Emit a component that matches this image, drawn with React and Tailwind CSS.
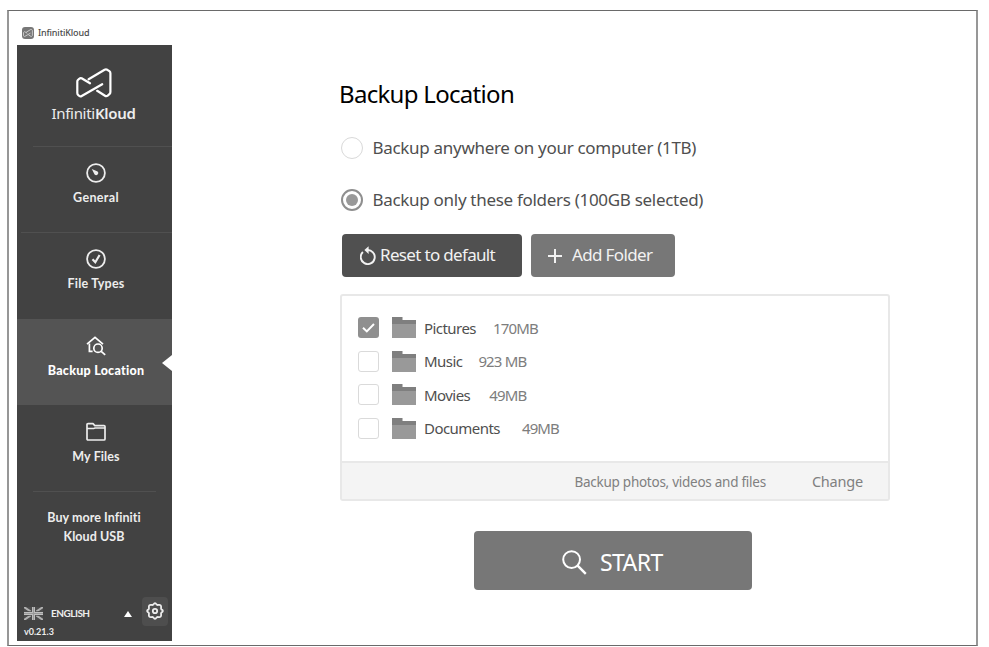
import { useState } from 'react';

const LogoMark = ({ className, strokeWidth = 2.2 }) => (
  <svg viewBox="0 0 36 30" className={className} fill="none" stroke="currentColor" strokeWidth={strokeWidth} strokeLinecap="round" strokeLinejoin="round">
    <path d="M14 15.3 L5.6 10.3 Q4.4 9.8 3.2 10.8 L1.9 12 Q1.3 12.6 1.3 13.6 V25 Q1.3 26.4 2.3 27.2 L3.3 28 Q4.4 28.9 5.7 28 L26.2 16.2" />
    <path d="M12.6 11.3 L28.6 1.8 Q30 1 31.3 1.8 L33.4 3.2 Q34.4 3.9 34.4 5.2 V24 Q34.4 25.3 33.4 26.2 L31.7 27.6 Q30.4 28.6 29 27.7 L21.2 22.8" />
  </svg>
);

const GaugeIcon = () => (
  <svg viewBox="0 0 20 20" className="w-5 h-5" fill="none" stroke="currentColor" strokeWidth="1.8">
    <circle cx="10" cy="10" r="8.9" />
    <path d="M5.8 6 L11.6 8.6 A2 2 0 1 1 8.6 11.6 Z" fill="currentColor" stroke="none" />
  </svg>
);

const CheckCircleIcon = () => (
  <svg viewBox="0 0 20 20" className="w-5 h-5" fill="none" stroke="currentColor" strokeWidth="1.8">
    <circle cx="10" cy="10" r="8.9" />
    <path d="M6.5 10.2 L9.3 13.2 L13.6 6" strokeWidth="2.2" />
  </svg>
);

const HomeSearchIcon = () => (
  <svg viewBox="0 0 20 20" className="w-5 h-5" fill="none" stroke="currentColor" strokeWidth="1.7">
    <path d="M1 8.2 L9 1.4 L17 8.2" />
    <path d="M3.4 7.4 V15.4 H6.6" />
    <circle cx="12" cy="12.2" r="4.2" />
    <path d="M15.2 15.3 L19.2 18.8" />
  </svg>
);

const FolderOutlineIcon = () => (
  <svg viewBox="0 0 20 20" className="w-5 h-5" fill="none" stroke="currentColor" strokeWidth="1.7" strokeLinejoin="round">
    <path d="M1 17 V2.6 Q1 1.6 2 1.6 H7 L8.8 3.6 H18 Q19 3.6 19 4.6 V17 Q19 18 18 18 H2 Q1 18 1 17 Z" />
    <path d="M1 6.6 H7.6 L9 6 H19" strokeWidth="1.5" />
  </svg>
);

const FlagIcon = () => (
  <svg viewBox="0 0 19 13" className="w-[19px] h-[13px]">
    <rect width="19" height="13" fill="#4c4c4c" />
    <path d="M0 0 L19 13 M19 0 L0 13" stroke="#b0b0b0" strokeWidth="2" />
    <path d="M9.5 0 V13 M0 6.5 H19" stroke="#4c4c4c" strokeWidth="4.4" />
    <path d="M9.5 0 V13 M0 6.5 H19" stroke="#c0c0c0" strokeWidth="3" />
    <path d="M9.5 0 V13 M0 6.5 H19" stroke="#999999" strokeWidth="1.2" />
  </svg>
);

const GearIcon = () => (
  <svg viewBox="0 0 18 18" className="w-[18px] h-[18px]" fill="none" stroke="currentColor" strokeWidth="1.8" strokeLinejoin="round">
    <path d="M7.4 2.6 Q9 -0.4 10.6 2.6 Q11.5 3.2 12.4 2.9 Q15.5 2.4 15.1 5.6 Q14.8 6.5 15.4 7.4 Q18.4 9 15.4 10.6 Q14.8 11.5 15.1 12.4 Q15.5 15.6 12.4 15.1 Q11.5 14.8 10.6 15.4 Q9 18.4 7.4 15.4 Q6.5 14.8 5.6 15.1 Q2.4 15.6 2.9 12.4 Q3.2 11.5 2.6 10.6 Q-0.4 9 2.6 7.4 Q3.2 6.5 2.9 5.6 Q2.4 2.4 5.6 2.9 Q6.5 3.2 7.4 2.6 Z" />
    <circle cx="9" cy="9" r="2.2" />
  </svg>
);

const FolderIcon = () => (
  <svg viewBox="0 0 24 21" className="w-6 h-[21px]">
    <path d="M0 0 H10.5 V3 H24 V21 H0 Z" fill="#7f7f7f" />
    <rect y="7" width="24" height="14" fill="#999999" />
  </svg>
);

const ResetIcon = () => (
  <svg viewBox="0 0 16 19" className="w-4 h-[19px]" fill="none" stroke="currentColor" strokeWidth="1.9">
    <path d="M2.9 6 A7 7 0 1 0 7 4.1 H8.5" />
    <path d="M4.4 4.1 L8.6 0.2 V8 Z" fill="currentColor" stroke="none" />
  </svg>
);

const menuItems = [
  { icon: <GaugeIcon />, label: 'General', text: 'tracking-[0.35px]' },
  { icon: <CheckCircleIcon />, label: 'File Types', text: 'tracking-[0.2px]' },
  { icon: <HomeSearchIcon />, label: 'Backup Location', text: 'tracking-[0.25px]' },
  { icon: <FolderOutlineIcon />, label: 'My Files', text: 'tracking-[0.1px]' },
];

const initialFolders = [
  { name: 'Pictures', size: '170MB', checked: true, gap: 'ml-[17px]' },
  { name: 'Music', size: '923 MB', checked: false, gap: 'ml-4' },
  { name: 'Movies', size: '49MB', checked: false, gap: 'ml-[19px]' },
  { name: 'Documents', size: '49MB', checked: false, gap: 'ml-[22px]' },
];

const Sidebar = ({ active, onSelect }) => (
  <aside className="w-[155px] h-[596px] flex flex-col bg-[#424242] text-[#ededed] font-['Lato',sans-serif]">
    <div className="h-[101px] pt-[23px] flex flex-col items-center">
      <LogoMark className="w-9 h-[30px] -ml-[1px] text-white" />
      <div className="mt-[5px] -ml-[2px] text-[15px] leading-5 font-['Noto_Sans',sans-serif] tracking-[-0.3px] whitespace-nowrap">
        Infiniti<span className="font-semibold">Kloud</span>
      </div>
    </div>

    <nav className="flex flex-col">
      {menuItems.map((item, i) => {
        const isActive = item.label === active;
        return (
          <button
            key={item.label}
            onClick={() => onSelect(item.label)}
            className={`relative h-[86.3px] pt-[17px] flex flex-col items-center ${isActive ? 'bg-[#545454] text-white' : ''}`}
          >
            {i < 2 && <span className={`absolute top-0 right-0 h-px bg-[#505050] ${i === 0 ? 'left-4' : 'left-1'}`} />}
            <span className="ml-[2px]">{item.icon}</span>
            <span className={`mt-[6px] ml-[3px] text-[12.5px] leading-[18px] whitespace-nowrap ${item.text} ${isActive ? 'font-black' : 'font-bold'}`}>{item.label}</span>
            {isActive && (
              <span className="absolute right-0 top-[36px] border-y-[8px] border-y-transparent border-r-[10px] border-r-white" />
            )}
          </button>
        );
      })}
    </nav>

    <div className="mx-4 h-px bg-[#505050]" />
    <p className="mt-[17px] pr-px text-center text-[12.5px] leading-[18.5px] font-bold tracking-[0.05px]">
      Buy more Infiniti
      <br />
      Kloud USB
    </p>

    <div className="mt-auto h-[44px] pl-[7px] pr-[4px] flex">
      <div className="flex-1">
        <div className="mt-[9px] h-[15px] flex items-center">
          <FlagIcon />
          <span className="ml-2 text-[10px] font-bold tracking-[-0.5px]">ENGLISH</span>
          <span className="ml-auto mr-[10px] border-x-[4px] border-x-transparent border-b-[6px] border-b-white" />
        </div>
        <div className="mt-[5px] text-[9px] leading-3 font-bold">v0.21.3</div>
      </div>
      <button className="w-[26px] h-[29px] pb-[2px] flex items-center justify-center rounded-sm bg-[#4e4e4e]" title="Settings">
        <GearIcon />
      </button>
    </div>
  </aside>
);

const RadioRow = ({ label, selected, onClick, text }) => (
  <button onClick={onClick} className="h-[52px] flex items-center">
    <span className={`w-[22px] h-[22px] ml-[0.5px] mb-px rounded-full flex items-center justify-center ${selected ? 'border-2 border-[#8f8f8f]' : 'border border-[#d9d9d9]'}`}>
      {selected && <span className="w-3 h-3 rounded-full bg-[#999999]" />}
    </span>
    <span className={`ml-[10px] text-[17px] text-[#4f4f4f] whitespace-nowrap ${text}`}>{label}</span>
  </button>
);

const App = () => {
  const [active, setActive] = useState('Backup Location');
  const [mode, setMode] = useState('folders');
  const [folders, setFolders] = useState(initialFolders);

  const toggleFolder = (name) => {
    setFolders(folders.map((f) => (f.name === name ? { ...f, checked: !f.checked } : f)));
  };

  return (
    <div className="w-[989px] h-[647px] pt-[10px] pl-[7px] bg-white overflow-hidden">
      <div className="w-[971px] h-[636px] border-x-2 border-x-[#979797] border-y border-y-[#6a6a6a] pl-2">
        <header className="h-[34px] pt-[10px] pl-[5px] flex items-center text-[#4a4a4a]">
          <span className="w-[12px] h-[12px] rounded-[3px] bg-[#777777] flex items-center justify-center text-[#dddddd]">
            <LogoMark className="w-[10px] h-[8px]" strokeWidth={3} />
          </span>
          <span className="ml-[4px] text-[9px] font-medium tracking-[-0.15px] font-['Noto_Sans',sans-serif]">InfinitiKloud</span>
        </header>

        <div className="flex">
          <Sidebar active={active} onSelect={setActive} />

          <main className="ml-[168px] w-[549px] pt-[33px] flex flex-col items-start font-['Noto_Sans',sans-serif]">
            <h1 className="h-[32px] -ml-px leading-8 text-[24px] text-black tracking-[-0.7px] whitespace-nowrap">Backup Location</h1>

            <div className="mt-[12px] flex flex-col items-start">
              <RadioRow label="Backup anywhere on your computer (1TB)" selected={mode === 'all'} onClick={() => setMode('all')} text="tracking-[-0.3px]" />
              <RadioRow label="Backup only these folders (100GB selected)" selected={mode === 'folders'} onClick={() => setMode('folders')} text="tracking-[-0.3px]" />
            </div>

            <div className="mt-[8px] ml-[2px] flex gap-[9px] text-[17px] text-[#f2f2f2] whitespace-nowrap">
              <button className="w-[180px] h-[43px] pl-[18px] flex items-center rounded bg-[#505050]">
                <ResetIcon />
                <span className="ml-[4px] pb-[2px] tracking-[-0.67px]">Reset to default</span>
              </button>
              <button className="w-[144px] h-[43px] pl-[17px] flex items-center rounded bg-[#777777]">
                <svg viewBox="0 0 14 14" className="w-[14px] h-[14px]" stroke="currentColor" strokeWidth="2">
                  <path d="M7 0 V14 M0 7 H14" />
                </svg>
                <span className="ml-[10px] pb-[2px] tracking-[-0.65px]">Add Folder</span>
              </button>
            </div>

            <section className="mt-[17px] w-[550px] h-[207px] flex flex-col border-2 border-[#e8e8e8] rounded-[3px]">
              <ul className="flex-1 pt-[15px] pl-4">
                {folders.map((folder) => (
                  <li key={folder.name} className="h-[33.6px] flex items-center">
                    <button
                      onClick={() => toggleFolder(folder.name)}
                      className={`w-[21px] h-[21px] rounded-[3px] flex items-center justify-center ${folder.checked ? 'bg-[#8f8f8f]' : 'border border-[#dadada] bg-white'}`}
                    >
                      {folder.checked && (
                        <svg viewBox="0 0 13 10" className="w-[13px] h-[10px]" fill="none" stroke="white" strokeWidth="2">
                          <path d="M1 4.8 L4.8 8.4 L12 1" />
                        </svg>
                      )}
                    </button>
                    <span className="ml-[13px]"><FolderIcon /></span>
                    <span className="ml-2 text-[15px] text-[#4f4f4f] tracking-[-0.55px]">{folder.name}</span>
                    <span className={`text-[15px] text-[#7d7d7d] tracking-[-0.85px] ${folder.gap}`}>{folder.size}</span>
                  </li>
                ))}
              </ul>
              <footer className="h-[38px] pr-[25px] pt-[2px] flex items-center justify-end bg-[#f4f4f4] border-t-2 border-[#e8e8e8] text-[#808080]">
                <span className="text-[13.5px] tracking-[-0.26px]">Backup photos, videos and files</span>
                <button className="ml-[46px] text-[14.5px] tracking-[-0.2px]">Change</button>
              </footer>
            </section>

            <button className="mt-[30px] ml-[134px] w-[278px] h-[59px] pl-[88px] flex items-center rounded bg-[#777777] text-white">
              <svg viewBox="0 0 25 25" className="mt-[3px] w-[25px] h-[25px]" fill="none" stroke="currentColor" strokeWidth="2">
                <circle cx="9.6" cy="9.6" r="8.4" />
                <path d="M15.6 15.6 L23.8 23.8" strokeWidth="2.4" />
              </svg>
              <span className="ml-[13px] mt-[4px] text-[23px] tracking-[-0.6px]">START</span>
            </button>
          </main>
        </div>
      </div>
    </div>
  );
};

export default App;
